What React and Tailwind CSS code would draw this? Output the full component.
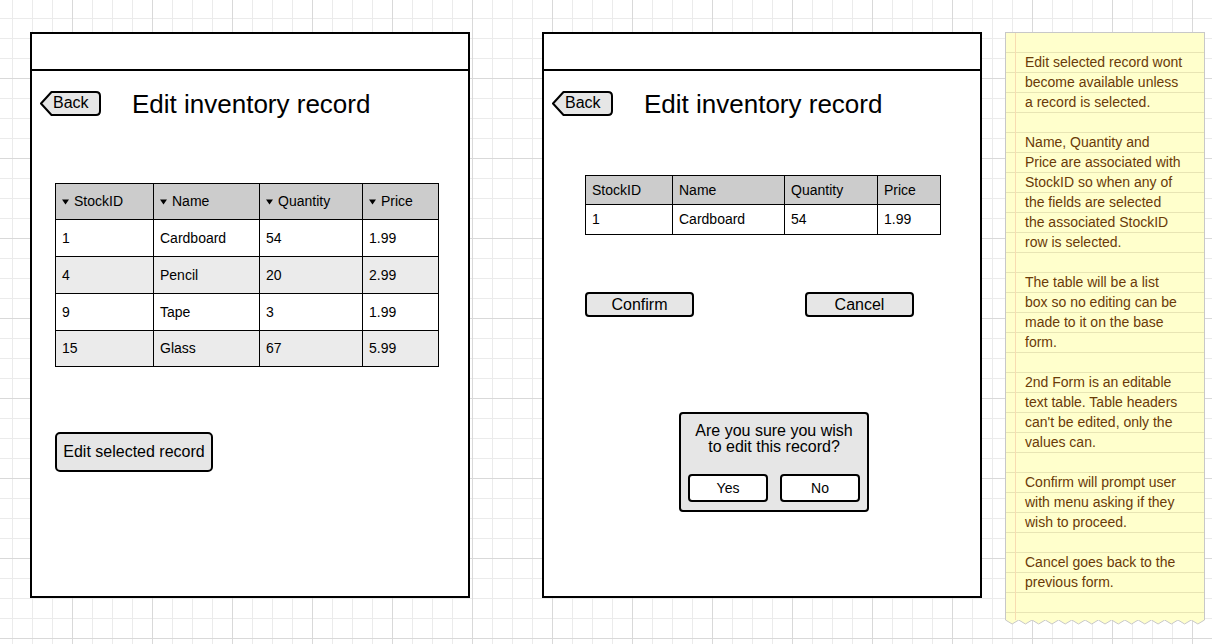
import React from 'react'

const rows = [
  ['1', 'Cardboard', '54', '1.99'],
  ['4', 'Pencil', '20', '2.99'],
  ['9', 'Tape', '3', '1.99'],
  ['15', 'Glass', '67', '5.99'],
]

function BackButton() {
  return (
    <div className="relative w-[62px] h-[26px] shrink-0">
      <svg className="absolute inset-0" width="62" height="26" viewBox="0 0 62 26">
        <path
          d="M1 12.5 L11.5 1 H56 Q60 1 60 5 V20 Q60 24 56 24 H11.5 Z"
          fill="#e6e6e6"
          stroke="#000"
          strokeWidth="2"
          strokeLinejoin="round"
        />
      </svg>
      <span className="absolute left-[13px] top-[2px] text-[16px] leading-[20px] text-black">Back</span>
    </div>
  )
}

function Caret() {
  return (
    <svg width="7" height="6" viewBox="0 0 7 6" className="shrink-0 mr-[5px]">
      <path d="M0 0.5 H7 L3.5 5.5 Z" fill="#000" />
    </svg>
  )
}

function TitleRow() {
  return (
    <div className="flex items-center h-[26px] mt-[20px] ml-[8px]">
      <BackButton />
      <h1 className="ml-[30px] text-[26px] leading-none text-black">Edit inventory record</h1>
    </div>
  )
}

function Frame({ children }) {
  return (
    <div className="w-[440px] h-[566px] shrink-0 border-2 border-black bg-white flex flex-col items-start">
      <div className="h-[37px] w-full border-b-2 border-black" />
      {children}
    </div>
  )
}

function ListTable() {
  return (
    <div className="ml-[23px] mt-[66px] grid grid-cols-[98px_106px_103px_76px] w-fit border-l border-t border-black text-[14px] text-black">
      {['StockID', 'Name', 'Quantity', 'Price'].map(h => (
        <div key={h} className="h-[36px] flex items-center pl-[6px] bg-[#cccccc] border-r border-b border-black">
          <Caret />
          {h}
        </div>
      ))}
      {rows.map((r, i) =>
        r.map((c, j) => (
          <div
            key={i + '-' + j}
            className={`${i === 3 ? 'h-[36px]' : 'h-[37px]'} ${i % 2 ? 'bg-[#ebebeb]' : 'bg-white'} flex items-center pl-[6px] border-r border-b border-black`}
          >
            {c}
          </div>
        ))
      )}
    </div>
  )
}

function EditTable() {
  return (
    <div className="ml-[41px] mt-[58px] grid grid-cols-[87px_112px_93px_63px] w-fit border-l border-t border-black text-[14px] text-black">
      {['StockID', 'Name', 'Quantity', 'Price'].map(h => (
        <div key={h} className="h-[29px] flex items-center pl-[6px] bg-[#cccccc] border-r border-b border-black">
          {h}
        </div>
      ))}
      {rows[0].map((c, j) => (
        <div key={j} className="h-[30px] flex items-center pl-[6px] bg-white border-r border-b border-black">
          {c}
        </div>
      ))}
    </div>
  )
}

const noteLines = [
  'Edit selected record wont', 'become available unless', 'a record is selected.', '',
  'Name, Quantity and', 'Price are associated with', 'StockID so when any of', 'the fields are selected', 'the associated StockID', 'row is selected.', '',
  'The table will be a list', 'box so no editing can be', 'made to it on the base', 'form.', '',
  '2nd Form is an editable', 'text table. Table headers', "can't be edited, only the", 'values can.', '',
  'Confirm will prompt user', 'with menu asking if they', 'wish to proceed.', '',
  'Cancel goes back to the', 'previous form.',
]

function StickyNote() {
  const teeth = 30
  let d = 'M0.5 0 '
  for (let i = 1; i <= teeth; i++) {
    const x = (i * 199) / teeth + 0.5
    d += `L${x} ${i % 2 ? 4 : 0} `
  }
  return (
    <div className="ml-[23px] w-[200px] shrink-0 flex flex-col">
      <div className="h-[588px] border border-b-0 border-[#c8c8c8] bg-[#ffffcc] bg-[linear-gradient(to_right,transparent_9px,#f8dcb0_9px,#f8dcb0_10px,transparent_10px),linear-gradient(to_bottom,transparent_19px,#e8e5b4_19px,#e8e5b4_20px)] bg-[size:100%_100%,100%_20px] pl-[19px] pt-[19px] text-[14px] leading-[20px] text-[#6a3a08]">
        {noteLines.map((l, i) => (
          <div key={i} className="h-[20px] whitespace-nowrap">{l}</div>
        ))}
      </div>
      <svg width="200" height="5" viewBox="0 0 200 5" className="block">
        <path d={d + 'L199.5 0 Z'} fill="#ffffcc" />
        <path d={d} fill="none" stroke="#c8c8c8" strokeWidth="1" />
      </svg>
    </div>
  )
}

export default function App() {
  return (
    <div className="w-[1212px] h-[644px] overflow-hidden flex items-start pl-[30px] pt-[32px] bg-white bg-[linear-gradient(to_right,#d9d9d9_1px,transparent_1px),linear-gradient(to_bottom,#d9d9d9_1px,transparent_1px),linear-gradient(to_right,#ebebeb_1px,transparent_1px),linear-gradient(to_bottom,#ebebeb_1px,transparent_1px)] bg-[size:80px_80px,80px_80px,20px_20px,20px_20px] bg-[position:72px_78px,72px_78px,12px_18px,12px_18px] font-['Liberation_Sans',Arial,sans-serif]">
      <Frame>
        <TitleRow />
        <ListTable />
        <button className="ml-[23px] mt-[65px] w-[158px] h-[40px] rounded-[5px] border-2 border-black bg-[#e6e6e6] text-[16px] text-black">
          Edit selected record
        </button>
      </Frame>

      <div className="ml-[72px]">
        <Frame>
          <TitleRow />
          <EditTable />
          <div className="ml-[41px] mt-[57px] flex gap-[111px]">
            <button className="w-[109px] h-[25px] rounded-[4px] border-2 border-black bg-[#e6e6e6] text-[16px] leading-none text-black">Confirm</button>
            <button className="w-[109px] h-[25px] rounded-[4px] border-2 border-black bg-[#e6e6e6] text-[16px] leading-none text-black">Cancel</button>
          </div>
          <div className="ml-[135px] mt-[95px] w-[190px] h-[100px] rounded-[4px] border-2 border-black bg-[#e6e6e6] flex flex-col items-center pt-[9px]">
            <p className="text-[16px] leading-[16px] text-center text-black">
              Are you sure you wish<br />to edit this record?
            </p>
            <div className="mt-[19px] flex gap-[12px]">
              <button className="w-[80px] h-[28px] rounded-[4px] border-2 border-black bg-white text-[14px] text-black">Yes</button>
              <button className="w-[80px] h-[28px] rounded-[4px] border-2 border-black bg-white text-[14px] text-black">No</button>
            </div>
          </div>
        </Frame>
      </div>

      <StickyNote />
    </div>
  )
}
